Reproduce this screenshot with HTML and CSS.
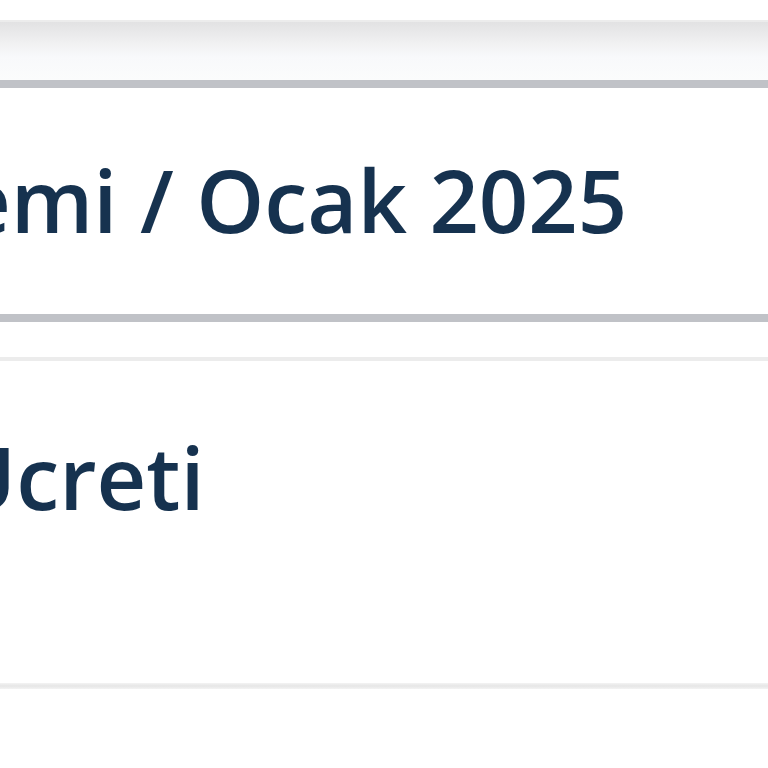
FILE: index.html
```html
<!DOCTYPE html>
<html lang="tr">
<head>
<meta charset="utf-8">
<link rel="stylesheet" href="styles.css">
</head>
<body>
<div class="page">
  <div class="topbar"></div>
  <div class="row row-period"><span class="label cut-1">emi / Ocak 2025</span></div>
  <div class="band"></div>
  <div class="spacer"></div>
  <div class="row row-fee"><span class="label cut-2">Ucreti</span></div>
  <div class="rule"></div>
</div>
</body>
</html>
```
FILE: styles.css
```css
html, body { margin: 0; padding: 0; background: #ffffff; }
.page { width: 768px; height: 768px; overflow: hidden; font-family: "Open Sans", "Noto Sans", sans-serif; color: #16324f; }
.topbar { margin-top: 20px; height: 60px; background: linear-gradient(#e2e2e3 0%, #f0f0f1 35%, #f8f9fb 60%, #fbfcfc 100%); border-top: 2px solid #ececec; box-sizing: border-box; }
.band { height: 8px; background: #c0c2c7; }
.row { display: flex; white-space: nowrap; overflow: hidden; }
.row-period { height: 226px; align-items: center; border-top: 8px solid #c0c2c7; }
.label { font-size: 86.5px; font-weight: 600; line-height: 100px; display: block; }
.cut-1 { margin-left: -39px; margin-top: -2px; }
.cut-2 { margin-left: -48px; }
.spacer { height: 35px; border-bottom: 4px solid #ececec; }
.row-fee { height: 322px; align-items: flex-start; padding-top: 66px; box-sizing: border-box; }
.rule { height: 6px; background: linear-gradient(#f3f3f3, #e6e6e6 50%, #f3f3f3); }
```
